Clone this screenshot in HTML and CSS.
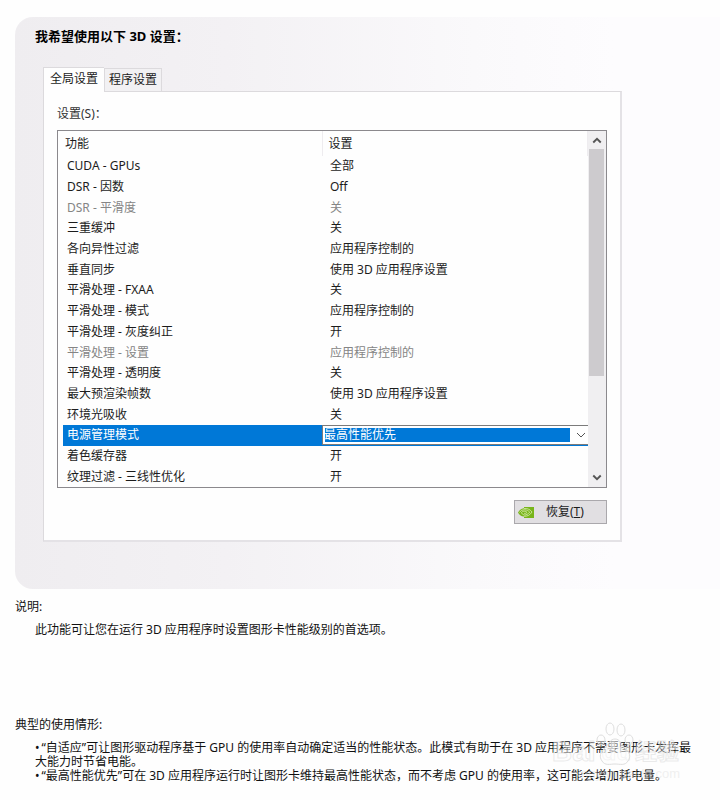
FILE: index.html
```html
<!DOCTYPE html>
<html lang="zh-CN">
<head>
<meta charset="utf-8">
<title>3D 设置</title>
<link rel="stylesheet" href="styles.css">
</head>
<body>
<main class="panel">
  <h1 class="title">我希望使用以下 3D 设置：</h1>
  <div class="tabs" role="tablist">
    <button class="tab tab-active" role="tab" aria-selected="true">全局设置</button>
    <button class="tab" role="tab" aria-selected="false">程序设置</button>
  </div>
  <section class="sheet">
    <h2 class="list-label" id="list-label">设置(S)：</h2>
    <div class="list">
      <table class="settings" aria-labelledby="list-label">
        <thead><tr><th>功能</th><th>设置</th></tr></thead>
        <tbody>
          <tr><td>CUDA - GPUs</td><td>全部</td></tr>
          <tr><td>DSR - 因数</td><td>Off</td></tr>
          <tr class="disabled"><td>DSR - 平滑度</td><td>关</td></tr>
          <tr><td>三重缓冲</td><td>关</td></tr>
          <tr><td>各向异性过滤</td><td>应用程序控制的</td></tr>
          <tr><td>垂直同步</td><td>使用 3D 应用程序设置</td></tr>
          <tr><td>平滑处理 - FXAA</td><td>关</td></tr>
          <tr><td>平滑处理 - 模式</td><td>应用程序控制的</td></tr>
          <tr><td>平滑处理 - 灰度纠正</td><td>开</td></tr>
          <tr class="disabled"><td>平滑处理 - 设置</td><td>应用程序控制的</td></tr>
          <tr><td>平滑处理 - 透明度</td><td>关</td></tr>
          <tr><td>最大预渲染帧数</td><td>使用 3D 应用程序设置</td></tr>
          <tr><td>环境光吸收</td><td>关</td></tr>
          <tr class="selected">
            <td><label for="power">电源管理模式</label></td>
            <td class="editor">
              <div class="combo">
                <select id="power"><option>最高性能优先</option></select>
                <svg class="combo-arrow" viewBox="0 0 10 6" aria-hidden="true"><path d="M1 1l4 4 4-4"/></svg>
              </div>
            </td>
          </tr>
          <tr><td>着色缓存器</td><td>开</td></tr>
          <tr><td>纹理过滤 - 三线性优化</td><td>开</td></tr>
        </tbody>
      </table>
      <div class="scrollbar">
        <button class="scroll-button" aria-label="向上滚动"><svg viewBox="0 0 8 6"><path d="M1 5l3-3 3 3"/></svg></button>
        <div class="track"><div class="thumb"></div></div>
        <button class="scroll-button" aria-label="向下滚动"><svg viewBox="0 0 8 6"><path d="M1 1l3 3 3-3"/></svg></button>
      </div>
    </div>
    <div class="actions">
      <button class="restore">
        <svg class="logo" viewBox="0 0 16 11" aria-hidden="true">
          <path class="logo-fill" d="M6 0h10v11H6V9.500C3 9.500 1 7.500 0 5.500 1.500 3 3.500 1.500 6 1.300z"/>
          <path class="logo-line" d="M6 1.500C10 1 12.500 3 14 5c-2 3-4.500 4.500-8 4.300M1.500 5.500C3 3.300 4.500 2.800 6.500 2.800c2.500 0 4 1 5.200 2.400C10 7.200 8.500 8 6.500 8 4.500 7.500 3.600 6.500 3.500 5.500 4.500 4.300 6 4 7.200 4.300 8.500 4.600 9 5.300 9 5.300 8 6.400 7 6.600 6 6.200"/>
        </svg>
        <span class="restore-text">恢复(<u>T</u>)</span>
      </button>
    </div>
  </section>
</main>
<section class="note description">
  <h2>说明:</h2>
  <p>此功能可让您在运行 3D 应用程序时设置图形卡性能级别的首选项。</p>
</section>
<section class="note usage">
  <h2>典型的使用情形:</h2>
  <ul>
    <li>“自适应”可让图形驱动程序基于 GPU 的使用率自动确定适当的性能状态。此模式有助于在 3D 应用程序不需要图形卡发挥最大能力时节省电能。</li>
    <li>“最高性能优先”可在 3D 应用程序运行时让图形卡维持最高性能状态，而不考虑 GPU 的使用率，这可能会增加耗电量。</li>
  </ul>
  <div class="watermark">
    <svg class="paw" viewBox="0 0 36 44" aria-hidden="true">
      <ellipse cx="13" cy="7" rx="4" ry="6"/><ellipse cx="24" cy="8" rx="4" ry="6"/>
      <ellipse cx="4" cy="18" rx="4" ry="5"/><ellipse cx="32" cy="18" rx="4" ry="5"/>
      <path d="M18 17c5 0 6 5 10 9 5 4 6 9 3 13-3 5-8 3-13 3s-10 2-13-3c-3-4-2-9 3-13 4-4 5-9 10-9z"/>
    </svg>
    <div class="brand"><span>Bai</span><span class="du">du</span><span class="brand-cn">经验</span></div>
    <div class="site">jingyan.baidu.com</div>
  </div>
</section>
</body>
</html>
```

FILE: styles.css
```css
* { box-sizing: border-box; }

body {
  margin: 0;
  padding: 17px 0 0 15px;
  background: #fefefe;
  color: #1c1c1c;
  font: 12px/16px "Noto Sans", "Noto Sans CJK SC", sans-serif;
}

button, select { font: inherit; color: inherit; }
h1, h2, p, ul { margin: 0; padding: 0; }
h2 { font-size: 12px; font-weight: 400; }

.panel {
  padding: 10px 98px 47px 28px;
  border-radius: 18px 0 0 18px;
  background: linear-gradient(90deg, #efedf0 0, #f3f1f4 30%, #faf9fb 65%, #fdfcfe 85%);
}

.title {
  margin-left: -8px;
  font-size: 13px;
  line-height: 18px;
  color: #000;
}

.tabs {
  display: flex;
  align-items: flex-end;
  margin-top: 22px;
}

.tab {
  height: 23px;
  padding: 0 4px;
  border: 1px solid #dcdadd;
  border-bottom: 0;
  background: #f2f1f3;
}

.tab-active {
  height: 25px;
  padding: 0 6px 2px;
  margin-bottom: -1px;
  border-right: 0;
  background: #fefefe;
  z-index: 1;
}

.sheet {
  padding: 13px 13px 16px;
  border: 1px solid #dcdadd;
  border-right: 2px solid #e4e2e6;
  border-bottom: 2px solid #e4e2e6;
  background: #fefefe;
}

.list-label { line-height: 18px; color: #333; }

.list {
  display: flex;
  margin-top: 7px;
  padding-left: 5px;
  border: 1px solid #8b898d;
}

.settings {
  flex: 1;
  height: 356px;
  table-layout: fixed;
  border-collapse: collapse;
}

.settings th {
  height: 25px;
  padding: 0 6px 0 2px;
  border-right: 1px solid #eeecef;
  font-weight: 400;
  text-align: left;
}

.settings th + th { padding-left: 6px; }
.settings th:first-child { width: 259px; }
.settings td { padding: 0 4px; line-height: 16px; white-space: nowrap; }
.settings td + td { padding-left: 8px; }
.disabled { color: #858585; }
.selected { background: #0078d7; color: #fff; }
.settings td.editor { padding: 0; }

.combo { position: relative; margin: -2px 0; height: 20px; }

.combo select {
  display: block;
  width: 100%;
  height: 20px;
  padding: 2px 18px 2px 1px;
  border: 1px solid #7b7b7b;
  border-right: 0;
  border-radius: 0;
  appearance: none;
  background: #0078d7;
  box-shadow: inset 0 0 0 2px #fff, inset -18px 0 0 #fff;
  line-height: 14px;
}

.combo-arrow {
  position: absolute;
  top: 7px;
  right: 2px;
  width: 10px;
  height: 6px;
}

svg path { fill: none; stroke: #555; }

.scrollbar {
  display: flex;
  flex-direction: column;
  width: 18px;
  padding: 0 2px 0 1px;
  background: #f0eff1;
}

.scroll-button {
  display: grid;
  place-items: center;
  height: 18px;
  padding: 0;
  border: 0;
  background: transparent;
}

.scroll-button svg { width: 10px; height: 8px; }
.scroll-button path { stroke-width: 1.5; }
.track { flex: 1; }
.thumb { height: 71%; background: #cdcbce; }

.actions {
  display: flex;
  justify-content: flex-end;
  margin-top: 12px;
}

.restore {
  display: flex;
  align-items: center;
  width: 93px;
  height: 24px;
  padding: 0 3px;
  border: 1px solid #aaa8ac;
  background: #e1dfe2;
}

.logo { width: 16px; height: 11px; }
.logo .logo-fill { fill: #78b51b; stroke: none; }
.logo .logo-line { stroke: #d9edaf; stroke-width: 0.8; }
.restore-text { margin-left: 12px; }

.note { position: relative; color: #111; }
.note p { margin: 7px 0 0 20px; }
.description { margin-top: 10px; }
.usage { margin-top: 79px; }

.usage ul {
  margin: 8px 24px 0 20px;
  list-style: none;
  line-height: 14px;
}

.usage li::before { content: "•"; margin-right: 2px; }

.watermark {
  position: absolute;
  top: 5px;
  right: 40px;
  width: 128px;
  color: rgba(255, 255, 255, 0.45);
  -webkit-text-stroke: 1px rgba(215, 215, 215, 0.5);
  pointer-events: none;
}

.paw {
  position: absolute;
  left: 45px;
  width: 36px;
  height: 44px;
  overflow: visible;
}

.paw ellipse, .paw path {
  fill: rgba(255, 255, 255, 0.45);
  stroke: #dedede;
}

.brand {
  display: flex;
  align-items: center;
  padding-top: 16px;
  font-family: "Liberation Sans", "Noto Sans CJK SC", sans-serif;
  font-size: 28px;
  font-weight: 700;
  line-height: 28px;
}

.du { margin-left: 6px; font-size: 24px; }
.brand-cn { margin-left: 4px; font-size: 22px; }

.site {
  font-family: "Liberation Sans", sans-serif;
  font-size: 13px;
  line-height: 16px;
  text-align: right;
  color: rgba(225, 225, 225, 0.5);
  -webkit-text-stroke: 0;
}
```
